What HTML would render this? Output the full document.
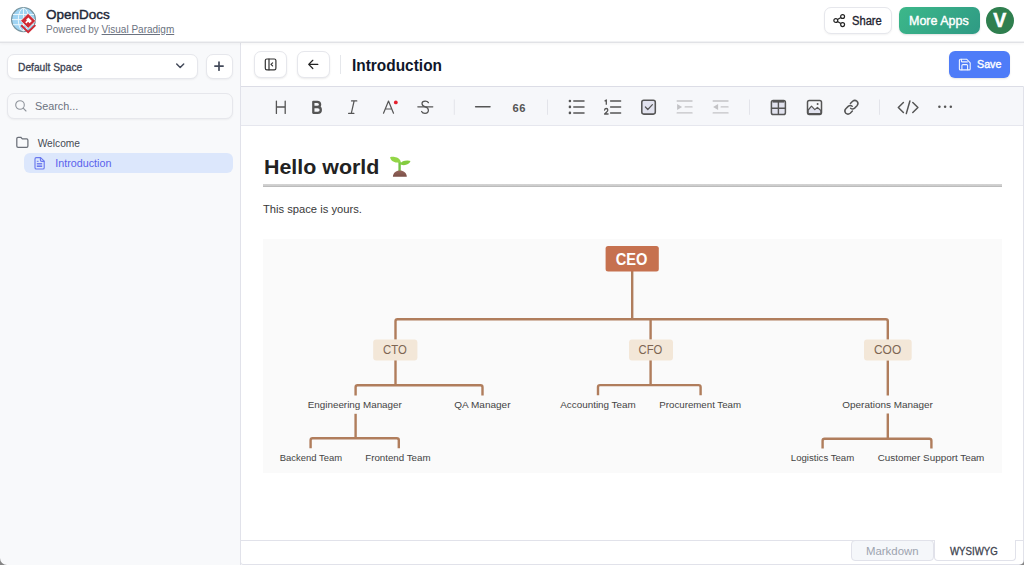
<!DOCTYPE html>
<html><head><meta charset="utf-8">
<style>
*{box-sizing:border-box;margin:0;padding:0}
html,body{width:1024px;height:565px;overflow:hidden;background:#fff;font-family:"Liberation Sans",sans-serif;color:#1f2937}
.a{position:absolute;white-space:nowrap;line-height:1}
svg{position:absolute;overflow:visible}
#header{position:absolute;left:0;top:0;width:1024px;height:43px;background:#fff;border-bottom:1px solid #e1e2e6;box-shadow:inset 0 -1px 0 #f1f2f4,0 1px 3px rgba(0,0,0,0.045);z-index:5}
#sidebar{position:absolute;left:0;top:42px;width:241px;height:523px;background:#f8f9fb;border-right:1px solid #e2e3ea}
.btn{position:absolute;background:#fff;border:1px solid #e6e7ec;border-radius:8px;box-shadow:0 1px 2px rgba(0,0,0,0.05)}
.ic{fill:none;stroke-linecap:round;stroke-linejoin:round}
.node{position:absolute;background:#f3e7d9;border-radius:3px}
.ln{position:absolute;background:#b07f5f}
.lf{position:absolute;white-space:nowrap;line-height:1;font-size:9.8px;color:#4b4b4b}
</style></head><body>

<!-- HEADER -->
<div id="header">
  <svg style="left:0;top:0" width="45" height="40" viewBox="0 0 45 40">
    <circle cx="23.5" cy="19.6" r="11.9" fill="#9fd4f3" stroke="#7895a0" stroke-width="1.3"/>
    <g stroke="#f2f9fd" stroke-width="0.9" fill="none">
      <ellipse cx="23.5" cy="19.6" rx="5.2" ry="11.4"/>
      <line x1="23.5" y1="8.2" x2="23.5" y2="31"/>
      <path d="M13 14.5 H34 M12 19.6 H35 M13 24.7 H34"/>
    </g>
    <path d="M28.1 13.4 L35.6 20.9 L28.2 28.3 L20.7 20.8 Z" fill="#d02a35" stroke="#fff" stroke-width="0.6"/>
    <path d="M28.4 17.4 L31.9 20.9 L29.6 23.2 L28.1 21.7 L26.4 23.4 L25.2 22.2 L26.9 20.5 L26.2 19.6 Z" fill="#fff"/>
    <path d="M21.2 25.3 L28.2 32.1 L35.4 25.1" stroke="#d02a35" stroke-width="1.9" fill="none"/>
  </svg>
  <div class="a" style="left:46px;top:8.3px;font-size:13px;color:#1d2738;-webkit-text-stroke:0.4px #1d2738;transform:scaleX(1.04);transform-origin:left">OpenDocs</div>
  <div class="a" style="left:46px;top:25px;font-size:10px;color:#737884">Powered by <span style="text-decoration:underline;text-underline-offset:0.8px;color:#6b7280">Visual Paradigm</span></div>

  <div class="btn" style="left:823.5px;top:7px;width:68px;height:26.5px;border-radius:7px"></div>
  <svg style="left:833px;top:14px" width="13" height="13" viewBox="0 0 13 13">
    <g stroke="#222" stroke-width="1.2" fill="none">
      <circle cx="9.6" cy="2.5" r="1.95"/><circle cx="2.8" cy="6.5" r="1.95"/><circle cx="9.6" cy="10.6" r="1.95"/>
      <line x1="4.5" y1="5.5" x2="7.9" y2="3.5"/><line x1="4.5" y1="7.5" x2="7.9" y2="9.6"/>
    </g>
  </svg>
  <div class="a" style="left:851.6px;top:15.2px;font-size:12px;color:#1f2430;-webkit-text-stroke:0.35px #1f2430;transform:scaleX(0.93);transform-origin:left">Share</div>

  <div class="a" style="left:898.5px;top:7px;width:81px;height:27px;border-radius:7px;background:linear-gradient(135deg,#3cb88a,#2f9a84);box-shadow:0 1px 2px rgba(0,0,0,0.12)"></div>
  <div class="a" style="left:909px;top:14.6px;font-size:12.5px;color:#fff;-webkit-text-stroke:0.4px #fff">More Apps</div>

  <div class="a" style="left:986px;top:6.5px;width:27.5px;height:27.5px;border-radius:50%;background:#2f7f4f"></div>
  <div class="a" style="left:993.3px;top:11.2px;font-size:19.5px;font-weight:bold;color:#fff;-webkit-text-stroke:0.5px #fff">V</div>
</div>

<!-- SIDEBAR -->
<div id="sidebar"></div>
<div class="btn" style="left:7px;top:53.5px;width:191px;height:25px;border-radius:7px"></div>
<div class="a" style="left:18.4px;top:62px;font-size:11px;color:#3a4150;-webkit-text-stroke:0.3px #3a4150;transform:scaleX(0.93);transform-origin:left">Default Space</div>
<svg style="left:0;top:0" width="240" height="90" viewBox="0 0 240 90"><path d="M176.7 64 L180.2 67.6 L183.7 64" fill="none" stroke="#434a5a" stroke-width="1.45" stroke-linecap="round" stroke-linejoin="round"/></svg>
<div class="btn" style="left:205.5px;top:53.5px;width:27px;height:25px;border-radius:7px"></div>
<svg style="left:0;top:0" width="240" height="90" viewBox="0 0 240 90"><path d="M219 62 V70.2 M214.9 66.1 H223.1" fill="none" stroke="#434a5a" stroke-width="1.7" stroke-linecap="round"/></svg>

<div class="btn" style="left:7px;top:93px;width:226px;height:26px;border-radius:7px;background:#f8f9fb"></div>
<svg style="left:15px;top:99.5px" width="12" height="12" viewBox="0 0 12 12"><g class="ic" stroke="#8f949c" stroke-width="1.1"><circle cx="5" cy="5" r="4.3"/><path d="M8.2 8.2 L11 11"/></g></svg>
<div class="a" style="left:35.4px;top:100.9px;font-size:11.5px;color:#6b7280;transform:scaleX(0.94);transform-origin:left">Search...</div>

<svg style="left:0;top:0" width="40" height="160" viewBox="0 0 40 160"><path d="M16.8 138.6 Q16.8 137.3 18.1 137.3 H20.8 L22.3 138.9 H26.6 Q27.9 138.9 27.9 140.2 V146 Q27.9 147.3 26.6 147.3 H18.1 Q16.8 147.3 16.8 146 Z" fill="none" stroke="#6b7079" stroke-width="1.25" stroke-linejoin="round"/></svg>
<div class="a" style="left:37.7px;top:138.8px;font-size:10.2px;color:#454a54">Welcome</div>

<div class="a" style="left:24px;top:152.7px;width:209px;height:20.5px;border-radius:6px;background:#dce7fc"></div>
<svg style="left:0;top:0" width="60" height="180" viewBox="0 0 60 180"><g fill="none" stroke="#6a78ee" stroke-width="1.15" stroke-linejoin="round" stroke-linecap="round"><path d="M35 158.9 Q35 157.6 36.3 157.6 H40.6 L44.2 161.2 V167.7 Q44.2 169 42.9 169 H36.3 Q35 169 35 167.7 Z"/><path d="M40.4 157.8 V160 Q40.4 161.3 41.7 161.3 H44"/><path d="M37.2 161.3 H38.2 M37.2 163.6 H41.8 M37.2 165.1 H41.8 M37.2 166.5 H41.8" stroke-width="1"/></g></svg>
<div class="a" style="left:55.2px;top:158.1px;font-size:10.75px;color:#5a62ec">Introduction</div>

<!-- MAIN TITLE BAR -->
<div class="btn" style="left:254px;top:51px;width:33px;height:27px;border-radius:7px;box-shadow:0 1px 2px rgba(0,0,0,0.08)"></div>
<svg style="left:0;top:0" width="330" height="80" viewBox="0 0 330 80"><g fill="none" stroke="#333" stroke-width="1.2" stroke-linecap="round" stroke-linejoin="round"><rect x="265.3" y="59" width="10.6" height="10.8" rx="1.6"/><path d="M269 59 V69.8 M272.6 62.9 L271 64.4 L272.6 65.9"/></g></svg>
<div class="btn" style="left:297px;top:51px;width:33px;height:27px;border-radius:7px;box-shadow:0 1px 2px rgba(0,0,0,0.08)"></div>
<svg style="left:0;top:0" width="330" height="80" viewBox="0 0 330 80"><path d="M317.8 64.4 H308.9 M312.8 60.3 L308.7 64.4 L312.8 68.5" fill="none" stroke="#222" stroke-width="1.25" stroke-linecap="round" stroke-linejoin="round"/></svg>
<div class="a" style="left:340px;top:55px;width:1px;height:19px;background:#e5e7eb"></div>
<div class="a" style="left:352px;top:56.6px;font-size:16.5px;font-weight:bold;color:#0f172a;transform:scaleX(0.935);transform-origin:left">Introduction</div>

<div class="a" style="left:949px;top:50.6px;width:61px;height:27.2px;border-radius:6px;background:#4e7cf8;box-shadow:0 1px 2px rgba(0,0,0,0.1)"></div>
<svg style="left:0;top:0" width="1024" height="90" viewBox="0 0 1024 90"><g fill="none" stroke="#fff" stroke-width="1.1" stroke-linejoin="round" stroke-linecap="round" opacity="0.92"><path d="M960.4 59.2 H966.6 L970.2 62.8 V68.9 Q970.2 69.9 969.2 69.9 H960.4 Q959.4 69.9 959.4 68.9 V60.2 Q959.4 59.2 960.4 59.2 Z"/><path d="M961.4 59.4 V60.9 Q961.4 61.9 962.4 61.9 H967.4"/><path d="M961.9 69.7 V65.6 Q961.9 64.6 962.9 64.6 H966.6 Q967.6 64.6 967.6 65.6 V69.7"/></g></svg>
<div class="a" style="left:976.6px;top:59px;font-size:11.5px;color:#fff;-webkit-text-stroke:0.4px #fff;transform:scaleX(0.93);transform-origin:left">Save</div>

<!-- EDITOR FRAME -->
<div class="a" style="left:240px;top:86px;width:784px;height:479px;border:1px solid #e1e2ea;border-radius:0 0 3px 3px"></div>
<div class="a" style="left:241px;top:86px;width:782px;height:40px;background:#f6f7fa;border-top:1px solid #dcdde6;border-bottom:1px solid #e6e7ee"></div>

<!-- TOOLBAR ICONS -->
<svg style="left:0;top:0" width="1024" height="565" viewBox="0 0 1024 565">
 <g fill="none" stroke="#555" stroke-linecap="round" stroke-linejoin="round">
  <!-- H -->
  <path d="M276.4 101.1 V113.4 M285.2 101.1 V113.4 M276.4 107 H285.2" stroke-width="1.3"/>
  <!-- B -->
  <path d="M313.3 101.8 H317.2 Q320.1 101.8 320.1 104.5 Q320.1 107 317.2 107 H313.3 Z M313.3 107 H317.7 Q320.8 107 320.8 109.9 Q320.8 112.8 317.7 112.8 H313.3 Z" stroke-width="2.3"/>
  <!-- I -->
  <path d="M351.5 100.9 H356.8 M348.6 113.4 H353.9 M354.1 101 L351.3 113.3" stroke-width="1.2"/>
  <!-- A -->
  <path d="M383.5 113.2 L388.5 101 L393.5 113.2 M385.3 109 H391.7" stroke-width="1.2"/>
  <!-- S strike -->
  <path d="M428.4 102.6 Q427.6 101 425.2 101 Q422 101 422 103.6 Q422 106 425.2 106.8 Q428.4 107.6 428.4 110.3 Q428.4 113.3 425 113.3 Q422.4 113.3 421.6 111.5" stroke-width="1.25"/>
  <path d="M417.8 106.8 H432.8" stroke-width="1.2"/>
  <!-- hr -->
  <path d="M475.6 106.8 H490" stroke-width="1.5"/>
  <!-- bullet list -->
  <path d="M573.8 101 H584 M573.8 106.9 H584 M573.8 112.9 H584" stroke-width="1.5"/>
  <!-- numbered list -->
  <path d="M610.6 101 H620.6 M610.6 106.9 H620.6 M610.6 112.9 H620.6" stroke-width="1.5"/>
  <!-- checkbox -->
  <rect x="641.8" y="100.2" width="13.5" height="13.9" rx="2" fill="#e1e2ee" stroke-width="1.55"/>
  <path d="M645.4 107 L647.8 109.5 L652.4 104.7" stroke-width="1.2"/>
  <!-- indent / outdent (disabled) -->
  <g stroke="#c3c3c6">
   <path d="M677.2 101 H692 M685.2 106.9 H692 M677.2 112.9 H692" stroke-width="1.4"/>
   <path d="M713.2 101 H728 M721.2 106.9 H728 M713.2 112.9 H728" stroke-width="1.4"/>
  </g>
  <!-- table -->
  <rect x="771.4" y="100.6" width="14" height="13.9" rx="1.8" fill="#e1e2ee" stroke-width="1.5"/>
  <path d="M772.6 101.5 H784.2" stroke-width="2.2" stroke-linecap="butt"/>
  <path d="M778.4 102 V114.4 M771.6 108.3 H785.2" stroke-width="1.4"/>
  <!-- image -->
  <rect x="807.5" y="100.4" width="14" height="14" rx="1.8" stroke-width="1.5"/>
  <path d="M808.2 110 L811.5 106.2 L814.8 109.6 L817.4 107.4 L820.8 110.5 V113.7 H808.2 Z" fill="#e1e2ee" stroke-width="1.2"/>
  <!-- link -->
  <path d="M850.4 103.5 L852.6 101.3 Q854.8 99.4 857 101.3 Q859 103.5 857 105.7 L854.6 108.1 Q852.6 109.9 850.6 108.2" stroke-width="1.5"/>
  <path d="M852.4 111 L850.2 113.2 Q848 115.1 845.8 113.2 Q843.8 111 845.8 108.8 L848.2 106.4 Q850.2 104.6 852.2 106.3" stroke-width="1.5"/>
  <!-- code -->
  <path d="M903.4 102.5 L898.3 107.5 L903.4 112.5 M912.8 102.5 L917.9 107.5 L912.8 112.5 M909.9 101 L906.3 113.6" stroke-width="1.5"/>
 </g>
 <g fill="#555">
  <circle cx="569.9" cy="101" r="1.3"/><circle cx="569.9" cy="106.9" r="1.3"/><circle cx="569.9" cy="112.9" r="1.3"/>
  <path d="M604.6 101.3 L606.3 99.9 V104.8" fill="none" stroke="#555" stroke-width="1.3" stroke-linejoin="round"/>
  <path d="M604.6 110 Q604.8 108.5 606.2 108.5 Q607.8 108.5 607.8 110 Q607.8 111.1 606.7 112 L604.6 114 H608.1" fill="none" stroke="#555" stroke-width="1.3" stroke-linejoin="round" stroke-linecap="round"/>
  <text x="512.5" y="111.6" font-size="11.2" font-weight="bold" font-family="Liberation Sans" letter-spacing="0.5">66</text>
  <circle cx="817.6" cy="104.1" r="1"/>
  <circle cx="939.4" cy="106.8" r="1.25"/><circle cx="945.1" cy="106.8" r="1.25"/><circle cx="950.8" cy="106.8" r="1.25"/>
  <path d="M677.1 103.9 L682.1 106.9 L677.1 109.9 Z" fill="#c3c3c6"/>
  <path d="M718.1 103.9 L713.1 106.9 L718.1 109.9 Z" fill="#c3c3c6"/>
 </g>
 <circle cx="395.8" cy="102.4" r="1.9" fill="#e5202e"/>
 <g fill="#e3e4ea">
  <rect x="453.8" y="99.5" width="1" height="15.3"/>
  <rect x="547" y="99.5" width="1" height="15.3"/>
  <rect x="749" y="99.5" width="1" height="15.3"/>
  <rect x="879" y="99.5" width="1" height="15.3"/>
 </g>
</svg>

<!-- CONTENT -->
<div class="a" style="left:264px;top:157.1px;font-size:20px;font-weight:bold;color:#222;transform:scaleX(1.07);transform-origin:left">Hello world</div>
<svg style="left:0;top:0" width="420" height="190" viewBox="0 0 420 190">
  <defs><linearGradient id="soil" x1="0" y1="0" x2="0" y2="1"><stop offset="0" stop-color="#93645b"/><stop offset="1" stop-color="#7b4f47"/></linearGradient></defs>
  <path d="M399.6 171 V162" stroke="#74c248" stroke-width="2.4" fill="none"/>
  <path d="M400.8 162.4 C400.6 159.2 398 157.2 394.5 156.9 C392.5 156.8 390.8 157 390.1 157.3 C390.5 160.3 393.2 162.4 397 162.6 C398.6 162.7 400 162.6 400.8 162.4 Z" fill="#93d647"/>
  <path d="M399.6 164 C401.4 161.2 404.5 160.3 407.6 160.4 C408.9 160.5 409.9 160.7 410.5 161 C409.6 163.6 407 165.1 403.8 165.2 C402 165.2 400.6 164.7 399.6 164 Z" fill="#83cc3e"/>
  <path d="M392.9 176.8 C393 173 396 170.6 399.8 170.6 C403.6 170.6 406.7 173 406.8 176.8 Z" fill="url(#soil)"/>
</svg>
<div class="a" style="left:263px;top:184px;width:739px;height:3px;background:linear-gradient(#d4d4d4 0%,#cdcdcd 55%,#b2b2b2 100%)"></div>
<div class="a" style="left:263px;top:203.5px;font-size:11.2px;color:#383838">This space is yours.</div>

<!-- CHART -->
<div class="a" style="left:263px;top:239px;width:739px;height:234px;background:#fafafa"></div>
<svg style="left:0;top:0" width="1024" height="565" viewBox="0 0 1024 565">
 <g fill="none" stroke="#b07d5c" stroke-width="2.4" stroke-linejoin="round">
  <path d="M632.2 271 V319.2"/>
  <path d="M395.5 339.7 V321.2 Q395.5 319.2 397.5 319.2 H885.8 Q887.8 319.2 887.8 321.2 V339.7"/>
  <path d="M650.6 319.2 V339.7"/>
  <path d="M395.5 360 V385.3"/>
  <path d="M355.6 395.5 V387.3 Q355.6 385.3 357.6 385.3 H480.5 Q482.5 385.3 482.5 387.3 V395.5"/>
  <path d="M355.6 413.8 V438.3"/>
  <path d="M310.6 448.3 V440.3 Q310.6 438.3 312.6 438.3 H396.8 Q398.8 438.3 398.8 440.3 V448.3"/>
  <path d="M650.6 360 V385.1"/>
  <path d="M598.0 395.3 V387.1 Q598.0 385.1 600.0 385.1 H698.6 Q700.6 385.1 700.6 387.1 V395.3"/>
  <path d="M887.8 360.2 V395.5"/>
  <path d="M887.8 413.5 V438.7"/>
  <path d="M822.6 448.6 V440.7 Q822.6 438.7 824.6 438.7 H929.4 Q931.4 438.7 931.4 440.7 V448.6"/>
 </g>
 <rect x="605.6" y="246" width="53.2" height="25.4" rx="2.5" fill="#c6714f"/>
 <g fill="#f3e7d8">
  <rect x="373.2" y="339.6" width="44.2" height="20.9" rx="3"/>
  <rect x="629" y="339.6" width="44" height="20.9" rx="3"/>
  <rect x="864" y="339.6" width="47.7" height="20.9" rx="3"/>
 </g>
 <g font-family="Liberation Sans" text-anchor="middle">
  <text x="631.6" y="264.5" font-size="16.4" font-weight="bold" fill="#fff" textLength="31.8" lengthAdjust="spacingAndGlyphs">CEO</text>
  <g font-size="13" fill="#7d6552">
   <text x="394.9" y="353.8" textLength="23.7" lengthAdjust="spacingAndGlyphs">CTO</text>
   <text x="650.5" y="353.8" textLength="23.8" lengthAdjust="spacingAndGlyphs">CFO</text>
   <text x="887.6" y="353.8" textLength="27.2" lengthAdjust="spacingAndGlyphs">COO</text>
  </g>
  <g font-size="9.6" fill="#444444">
   <text x="354.8" y="408.1" textLength="94" lengthAdjust="spacingAndGlyphs">Engineering Manager</text>
   <text x="482.4" y="408.1" textLength="56.2" lengthAdjust="spacingAndGlyphs">QA Manager</text>
   <text x="598" y="408.1" textLength="75.4" lengthAdjust="spacingAndGlyphs">Accounting Team</text>
   <text x="700.2" y="408.1" textLength="81.8" lengthAdjust="spacingAndGlyphs">Procurement Team</text>
   <text x="887.6" y="408.1" textLength="90.6" lengthAdjust="spacingAndGlyphs">Operations Manager</text>
   <text x="310.9" y="460.7" textLength="62.2" lengthAdjust="spacingAndGlyphs">Backend Team</text>
   <text x="397.9" y="460.7" textLength="65.4" lengthAdjust="spacingAndGlyphs">Frontend Team</text>
   <text x="822.5" y="460.7" textLength="63.4" lengthAdjust="spacingAndGlyphs">Logistics Team</text>
   <text x="931" y="460.7" textLength="106.7" lengthAdjust="spacingAndGlyphs">Customer Support Team</text>
  </g>
 </g>
</svg>

<!-- BOTTOM BAR -->
<div class="a" style="left:241px;top:540px;width:782px;height:1px;background:#e1e2ea"></div>
<div class="a" style="left:850.5px;top:540px;width:83.5px;height:20.5px;background:#f5f7fa;border:1px solid #e1e2ea;border-radius:4px"></div>
<div class="a" style="left:933.5px;top:540px;width:82px;height:20.5px;background:#fff;border:1px solid #e1e2ea;border-top:none;border-radius:0 0 4px 4px"></div>
<div class="a" style="left:866px;top:545.5px;font-size:11.4px;color:#9ca3af">Markdown</div>
<div class="a" style="left:950.3px;top:546.2px;font-size:10.5px;color:#40444f;-webkit-text-stroke:0.3px #40444f;transform:scaleX(0.92);transform-origin:left">WYSIWYG</div>
<div class="a" style="left:0;top:0;width:1024px;height:565px;border-radius:0 0 5px 7px;box-shadow:0 0 0 12px #858585;z-index:20;pointer-events:none"></div>
</body></html>
